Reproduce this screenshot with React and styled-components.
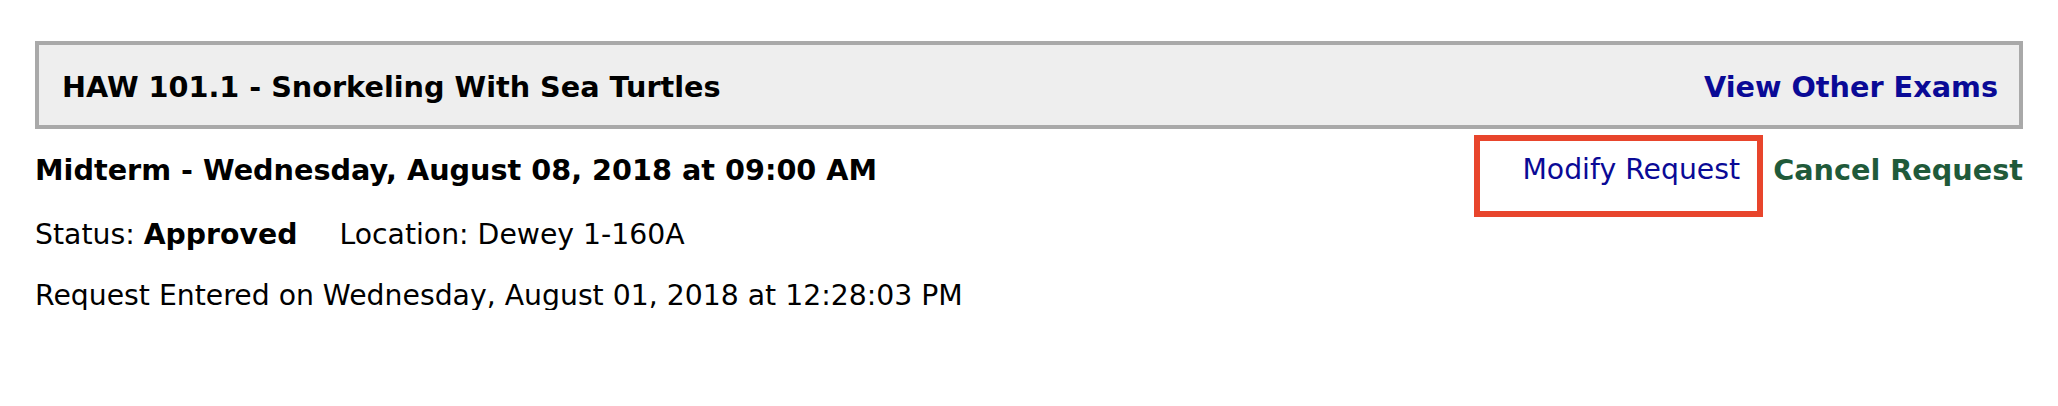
import React from 'react';
import styled, { createGlobalStyle } from 'styled-components';

const GlobalStyle = createGlobalStyle`
  body {
    margin: 0;
    background: #ffffff;
    font-family: "DejaVu Sans", Verdana, sans-serif;
    color: #000;
  }
`;

const Page = styled.div`
  padding: 41px 35px 0 35px;
`;

const Header = styled.div`
  display: flex;
  justify-content: space-between;
  align-items: center;
  height: 76px;
  padding: 4px 21px 0 23px;
  background-color: #eeeeee;
  border: 4px solid #a9a9a9;
`;

const CourseTitle = styled.h2`
  margin: 0;
  font-size: 28.7px;
  line-height: 28px;
  font-weight: bold;
`;

const HeaderLink = styled.a`
  font-size: 28.7px;
  line-height: 28px;
  font-weight: bold;
  color: #0a0a96;
  text-decoration: none;
`;

const ExamRow = styled.div`
  display: flex;
  justify-content: space-between;
  align-items: flex-start;
  margin-top: 6px;
`;

const ExamTitle = styled.div`
  padding-top: 21px;
  font-size: 28.7px;
  line-height: 28px;
  font-weight: bold;
`;

const Actions = styled.div`
  display: flex;
  align-items: flex-start;
  gap: 10px;
`;

const Highlight = styled.div`
  display: flex;
  justify-content: flex-end;
  box-sizing: border-box;
  width: 289px;
  height: 82px;
  padding: 15px 17px 0 0;
  border: 6px solid #e8452c;
`;

const ActionLink = styled.a`
  font-size: ${(p) => (p.$bold ? 28.7 : 28.3)}px;
  line-height: 28px;
  font-weight: ${(p) => (p.$bold ? 'bold' : 'normal')};
  color: ${(p) => p.$color};
  text-decoration: none;
  padding-top: ${(p) => p.$offset || 0}px;
  cursor: pointer;
`;

const InfoLine = styled.div`
  margin-top: ${(p) => p.$gap}px;
  font-size: 28.3px;
  line-height: 28px;
`;

const Location = styled.span`
  margin-left: 42px;
`;

export default function App() {
  return (
    <>
      <GlobalStyle />
      <Page>
        <Header>
          <CourseTitle>HAW 101.1 - Snorkeling With Sea Turtles</CourseTitle>
          <HeaderLink href="#">View Other Exams</HeaderLink>
        </Header>
        <ExamRow>
          <ExamTitle>Midterm - Wednesday, August 08, 2018 at 09:00 AM</ExamTitle>
          <Actions>
            <Highlight>
              <ActionLink href="#" $color="#0a0a96">Modify Request</ActionLink>
            </Highlight>
            <ActionLink href="#" $bold $color="#1f5a3a" $offset={21}>
              Cancel Request
            </ActionLink>
          </Actions>
        </ExamRow>
        <InfoLine $gap={4}>
          Status: <b>Approved</b>
          <Location>Location: Dewey 1-160A</Location>
        </InfoLine>
        <InfoLine $gap={33}>
          Request Entered on Wednesday, August 01, 2018 at 12:28:03 PM
        </InfoLine>
      </Page>
    </>
  );
}
